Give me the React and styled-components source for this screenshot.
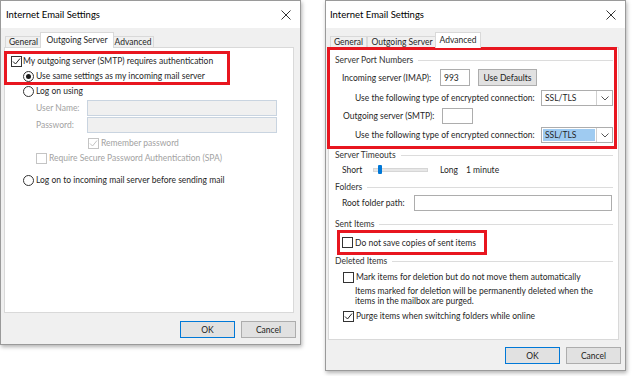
import styled, { createGlobalStyle } from "styled-components";

const GlobalStyle = createGlobalStyle`
  body {
    margin: 0;
    background: #ffffff;
    font-family: Lato, "Noto Sans", sans-serif;
  }
`;

const Page = styled.div`
  display: flex;
  align-items: flex-start;
  gap: 24px;
  width: 633px;
  height: 376px;
  overflow: hidden;
  font-size: 8.5px;
  color: #1f1f1f;
`;

const Dialog = styled.div`
  width: ${(p) => p.$width}px;
  height: ${(p) => p.$height}px;
  box-sizing: border-box;
  border: 1px solid #9a9a9a;
  background: #f0f0f0;
  box-shadow: 1px 2px 4px rgba(0, 0, 0, 0.3);
  display: flex;
  flex-direction: column;
  flex-shrink: 0;
`;

const TitleBar = styled.div`
  height: 27px;
  background: #ffffff;
  display: flex;
  align-items: center;
  justify-content: space-between;
  padding: 0 9px 0 ${(p) => p.$pad}px;
  font-size: 9.5px;
  color: #000;
`;

const TabStrip = styled.div`
  margin-top: 4px;
  height: 15px;
  display: flex;
  align-items: flex-end;
  padding-left: 4px;
`;

const Tab = styled.div`
  box-sizing: border-box;
  width: ${(p) => p.$width + (p.$active ? 4 : 0)}px;
  height: ${(p) => (p.$active ? 16 : 12)}px;
  margin: 0 ${(p) => (p.$active ? -2 : 0)}px -1px;
  border: 1px solid #d9d9d9;
  border-bottom: ${(p) => (p.$active ? "none" : "1px solid #d9d9d9")};
  background: ${(p) => (p.$active ? "#ffffff" : "#f0f0f0")};
  position: relative;
  z-index: ${(p) => (p.$active ? 2 : 1)};
  display: flex;
  align-items: center;
  justify-content: center;
  white-space: nowrap;
  padding-bottom: ${(p) => (p.$active ? 2 : 0)}px;
`;

const Panel = styled.div`
  box-sizing: border-box;
  margin-left: ${(p) => p.$left}px;
  width: ${(p) => p.$width}px;
  height: ${(p) => p.$height}px;
  background: #ffffff;
  border: 1px solid #d9d9d9;
  display: flex;
  flex-direction: column;
  position: relative;
  z-index: 1;
`;

const Highlight = styled.div`
  box-sizing: border-box;
  border: 3px solid #e8161f;
  margin: ${(p) => p.$margin};
  width: ${(p) => (p.$width ? `${p.$width}px` : "auto")};
  padding: ${(p) => p.$padding};
  display: flex;
  flex-direction: column;
`;

const Row = styled.div`
  display: flex;
  align-items: center;
  height: ${(p) => p.$h}px;
  margin-top: ${(p) => p.$top || 0}px;
  padding-left: ${(p) => p.$indent || 0}px;
  white-space: nowrap;
  color: ${(p) => (p.$disabled ? "#a2a2a2" : "inherit")};
`;

const GroupHeader = styled.div`
  display: flex;
  align-items: center;
  height: 12px;
  margin-top: ${(p) => p.$top || 0}px;
  padding: 0 ${(p) => p.$right}px 0 ${(p) => p.$indent}px;
  color: #333;
  white-space: nowrap;

  &::after {
    content: "";
    flex: 1;
    margin-left: 5px;
    border-top: 1px solid #dcdcdc;
  }
`;

const Label = styled.span`
  width: ${(p) => p.$width}px;
  margin-left: ${(p) => p.$gap || 0}px;
  flex-shrink: 0;
`;

const Caption = styled.span`
  margin-left: ${(p) => p.$gap || 2}px;
`;

const TextInput = styled.div`
  box-sizing: border-box;
  width: ${(p) => p.$width}px;
  height: 100%;
  border: 1px solid ${(p) => (p.$disabled ? "#c9d4e0" : "#adadad")};
  background: ${(p) => (p.$disabled ? "#f0f0f0" : "#ffffff")};
  display: flex;
  align-items: center;
  padding-left: 3px;
`;

const PushButton = styled.div`
  box-sizing: border-box;
  width: ${(p) => p.$width}px;
  height: 17px;
  margin-left: ${(p) => p.$gap || 0}px;
  background: #e1e1e1;
  border: 1px solid ${(p) => (p.$primary ? "#0078d7" : "#adadad")};
  display: flex;
  align-items: center;
  justify-content: center;
  color: #222;
`;

const ButtonBar = styled.div`
  display: flex;
  justify-content: flex-end;
  gap: 6px;
  margin-top: ${(p) => p.$top}px;
  padding-right: 4px;
`;

const SelectBox = styled.div`
  box-sizing: border-box;
  width: 72px;
  height: 100%;
  border: 1px solid #adadad;
  background: #ffffff;
  display: flex;
`;

const SelectValue = styled.div`
  flex: 1;
  margin: 1px;
  padding-left: 2px;
  display: flex;
  align-items: center;
  background: ${(p) => (p.$focused ? "#9fcbf1" : "transparent")};
`;

const SelectArrow = styled.div`
  width: 15px;
  border-left: 1px solid #d0d0d0;
  display: flex;
  align-items: center;
  justify-content: center;
`;

const Box = styled.div`
  box-sizing: border-box;
  width: 11px;
  height: 11px;
  flex-shrink: 0;
  border: 1px solid ${(p) => (p.$disabled ? "#c4c4c4" : "#333")};
  background: #fff;
  display: flex;
  align-items: center;
  justify-content: center;
`;

const RadioCircle = styled.div`
  box-sizing: border-box;
  width: 11px;
  height: 11px;
  flex-shrink: 0;
  border-radius: 50%;
  border: 1px solid #333;
  background: #fff;
  display: flex;
  align-items: center;
  justify-content: center;

  &::after {
    content: "";
    display: ${(p) => (p.$checked ? "block" : "none")};
    width: 5px;
    height: 5px;
    border-radius: 50%;
    background: #1a1a1a;
  }
`;

const SliderTrack = styled.div`
  position: relative;
  box-sizing: border-box;
  width: 55px;
  height: 4px;
  background: #e7e7e7;
  border: 1px solid #d6d6d6;
`;

const SliderThumb = styled.div`
  position: absolute;
  left: 4px;
  top: -4px;
  width: 4px;
  height: 9px;
  background: #0078d7;
  border-radius: 1px;
`;

const Paragraph = styled.div`
  margin: 2px 0 0 26px;
  line-height: 10px;
`;

function CloseIcon() {
  return (
    <svg width="10" height="10" viewBox="0 0 10 10">
      <path d="M0.5 0.5 L9.5 9.5 M9.5 0.5 L0.5 9.5" stroke="#333" strokeWidth="1" />
    </svg>
  );
}

function Checkbox({ checked, disabled }) {
  return (
    <Box $disabled={disabled}>
      {checked && (
        <svg width="9" height="9" viewBox="0 0 9 9">
          <polyline
            points="1,4.5 3.5,7 8,1.5"
            fill="none"
            stroke={disabled ? "#c4c4c4" : "#222"}
            strokeWidth="1"
          />
        </svg>
      )}
    </Box>
  );
}

function Select({ focused }) {
  return (
    <SelectBox>
      <SelectValue $focused={focused}>SSL/TLS</SelectValue>
      <SelectArrow>
        <svg width="8" height="5" viewBox="0 0 8 5">
          <polyline points="0.5,0.5 4,4 7.5,0.5" fill="none" stroke="#555" strokeWidth="1" />
        </svg>
      </SelectArrow>
    </SelectBox>
  );
}

function Tabs({ active }) {
  return (
    <TabStrip>
      <Tab $width={37} $active={active === 0}>General</Tab>
      <Tab $width={70} $active={active === 1}>Outgoing Server</Tab>
      <Tab $width={42} $active={active === 2}>Advanced</Tab>
    </TabStrip>
  );
}

function OutgoingDialog() {
  return (
    <Dialog $width={301} $height={345}>
      <TitleBar $pad={5}>
        <span>Internet Email Settings</span>
        <CloseIcon />
      </TitleBar>
      <Tabs active={1} />
      <Panel $left={3} $width={290} $height={266}>
        <Highlight $margin="3px 0 0 -1px" $width={226} $padding="1px 0 0 4px">
          <Row $h={12}>
            <Checkbox checked />
            <Caption $gap={1}>My outgoing server (SMTP) requires authentication</Caption>
          </Row>
          <Row $h={12} $top={3} $indent={12}>
            <RadioCircle $checked />
            <Caption>Use same settings as my incoming mail server</Caption>
          </Row>
        </Highlight>
        <Row $h={12} $indent={18}>
          <RadioCircle />
          <Caption>Log on using</Caption>
        </Row>
        <Row $h={16} $top={3} $indent={31} $disabled>
          <Label $width={51}>User Name:</Label>
          <TextInput $width={190} $disabled />
        </Row>
        <Row $h={16} $top={1} $indent={31} $disabled>
          <Label $width={51}>Password:</Label>
          <TextInput $width={190} $disabled />
        </Row>
        <Row $h={12} $top={4} $indent={83} $disabled>
          <Checkbox checked disabled />
          <Caption>Remember password</Caption>
        </Row>
        <Row $h={12} $top={3} $indent={31} $disabled>
          <Checkbox disabled />
          <Caption>Require Secure Password Authentication (SPA)</Caption>
        </Row>
        <Row $h={12} $top={10} $indent={18}>
          <RadioCircle />
          <Caption>Log on to incoming mail server before sending mail</Caption>
        </Row>
      </Panel>
      <ButtonBar $top={8}>
        <PushButton $width={55} $primary>OK</PushButton>
        <PushButton $width={55}>Cancel</PushButton>
      </ButtonBar>
    </Dialog>
  );
}

function AdvancedDialog() {
  return (
    <Dialog $width={301} $height={371}>
      <TitleBar $pad={4}>
        <span>Internet Email Settings</span>
        <CloseIcon />
      </TitleBar>
      <Tabs active={2} />
      <Panel $left={2} $width={291} $height={293}>
        <Highlight $margin="-1px 1px 0 -2px" $padding="4px 1px 3px 0">
          <GroupHeader $indent={5} $right={0}>Server Port Numbers</GroupHeader>
          <Row $h={17} $top={3} $indent={12}>
            <Label $width={98}>Incoming server (IMAP):</Label>
            <TextInput $width={30}>993</TextInput>
            <PushButton $width={59} $gap={8}>Use Defaults</PushButton>
          </Row>
          <Row $h={16} $top={4} $indent={25}>
            <Label $width={186}>Use the following type of encrypted connection:</Label>
            <Select />
          </Row>
          <Row $h={16} $top={2} $indent={13}>
            <Label $width={99}>Outgoing server (SMTP):</Label>
            <TextInput $width={31} />
          </Row>
          <Row $h={16} $top={3} $indent={25}>
            <Label $width={186}>Use the following type of encrypted connection:</Label>
            <Select focused />
          </Row>
        </Highlight>
        <GroupHeader $indent={6} $right={5}>Server Timeouts</GroupHeader>
        <Row $h={14} $top={2} $indent={13}>
          <Label $width={31}>Short</Label>
          <SliderTrack>
            <SliderThumb />
          </SliderTrack>
          <Label $width={26} $gap={12}>Long</Label>
          <span>1 minute</span>
        </Row>
        <GroupHeader $top={4} $indent={6} $right={5}>Folders</GroupHeader>
        <Row $h={16} $top={2} $indent={13}>
          <Label $width={72}>Root folder path:</Label>
          <TextInput $width={198} />
        </Row>
        <GroupHeader $top={7} $indent={6} $right={5}>Sent Items</GroupHeader>
        <Highlight $margin="0 0 0 8px" $width={150} $padding="0 0 0 2px">
          <Row $h={19}>
            <Checkbox />
            <Caption>Do not save copies of sent items</Caption>
          </Row>
        </Highlight>
        <GroupHeader $indent={6} $right={5}>Deleted Items</GroupHeader>
        <Row $h={14} $top={3} $indent={14}>
          <Checkbox />
          <Caption>Mark items for deletion but do not move them automatically</Caption>
        </Row>
        <Paragraph>
          Items marked for deletion will be permanently deleted when the
          <br />
          items in the mailbox are purged.
        </Paragraph>
        <Row $h={14} $top={3} $indent={14}>
          <Checkbox checked />
          <Caption>Purge items when switching folders while online</Caption>
        </Row>
      </Panel>
      <ButtonBar $top={7}>
        <PushButton $width={55} $primary>OK</PushButton>
        <PushButton $width={55}>Cancel</PushButton>
      </ButtonBar>
    </Dialog>
  );
}

export default function App() {
  return (
    <>
      <GlobalStyle />
      <Page>
        <OutgoingDialog />
        <AdvancedDialog />
      </Page>
    </>
  );
}
